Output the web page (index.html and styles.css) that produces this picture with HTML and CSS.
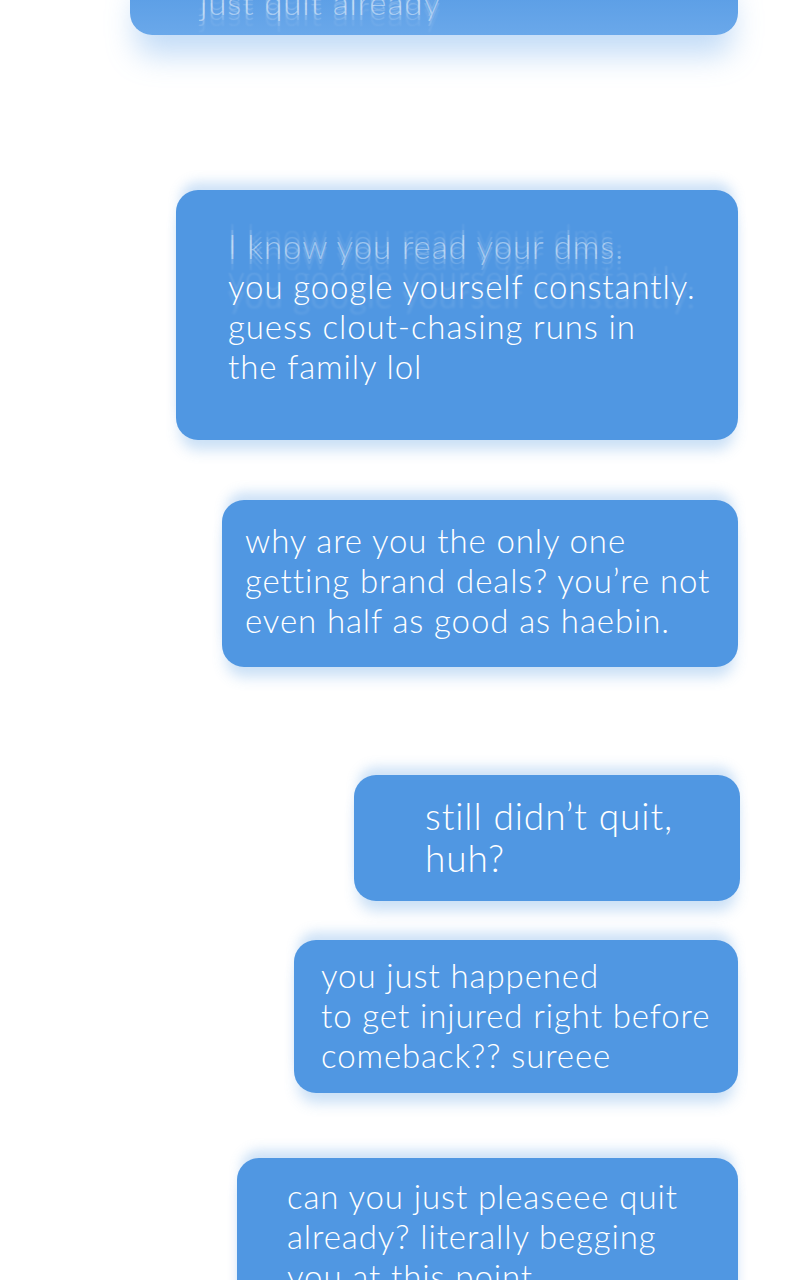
FILE: index.html
```html
<!DOCTYPE html>
<html lang="en">

<head>
    <meta charset="UTF-8">
    <meta name="viewport" content="width=device-width, initial-scale=1.0">
    <title>messages</title>
    <link rel="stylesheet" href="styles.css">
</head>

<body>
    <div class="thread">

        <!-- cut off at the top of the strip -->
        <div class="bubble bubble-first">
            <p class="line ghost">just quit already</p>
        </div>

        <div class="bubble bubble-dms">
            <p class="line ghost">I know you read your dms.</p>
            <p class="line echo">you google yourself constantly.</p>
            <p class="line">guess clout-chasing runs in</p>
            <p class="line">the family lol</p>
        </div>

        <div class="bubble bubble-deals">
            <p class="line">why are you the only one</p>
            <p class="line">getting brand deals? you’re not</p>
            <p class="line">even half as good as haebin.</p>
        </div>

        <div class="bubble bubble-quit">
            <p class="line">still didn’t quit,</p>
            <p class="line">huh?</p>
        </div>

        <div class="bubble bubble-injured">
            <p class="line">you just happened</p>
            <p class="line">to get injured right before</p>
            <p class="line">comeback?? sureee</p>
        </div>

        <div class="bubble bubble-beg">
            <p class="line">can you just pleaseee quit</p>
            <p class="line">already? literally begging</p>
            <p class="line">you at this point</p>
        </div>

    </div>
</body>

</html>
```

FILE: styles.css
```css
html, body {
    margin: 0;
    padding: 0;
    background: #fff;
    height: 1280px;
    overflow: hidden;
}

body {
    font-family: 'Lato', 'Noto Sans', sans-serif;
    font-weight: 300;
    color: #fff;
}

.thread {
    display: flex;
    flex-direction: column;
    align-items: flex-end;
    padding-right: 62px;
}

.bubble {
    box-sizing: border-box;
    background: #5097e2;
    border-radius: 22px;
    box-shadow:
        0 -12px 12px -4px rgba(80, 151, 226, 0.28),
        0 14px 14px -4px rgba(80, 151, 226, 0.3);
}

.line {
    margin: 0;
    font-size: 33px;
    line-height: 40px;
    letter-spacing: 0.9px;
    white-space: nowrap;
}

/* faded line, smeared up and down */
.ghost {
    color: rgba(255, 255, 255, 0.45);
    text-shadow:
        0 5px 1px rgba(255, 255, 255, 0.2),
        0 -5px 1px rgba(255, 255, 255, 0.2),
        0 11px 2px rgba(255, 255, 255, 0.1),
        0 -11px 2px rgba(255, 255, 255, 0.1);
}

.echo {
    text-shadow:
        0 -9px 2px rgba(255, 255, 255, 0.14),
        0 9px 3px rgba(255, 255, 255, 0.16);
}

.bubble-first {
    width: 608px;
    height: 75px;
    margin-top: -40px;
    padding: 22px 0 0 70px;
    background: linear-gradient(#4f96e2, #6aa8ea);
    box-shadow: 0 26px 30px -6px rgba(106, 168, 234, 0.4);
}

.bubble-dms {
    width: 562px;
    height: 250px;
    margin-top: 155px;
    padding: 36px 0 0 52px;
}

.bubble-deals {
    width: 516px;
    height: 167px;
    margin-top: 60px;
    padding: 20px 0 0 23px;
}

.bubble-quit {
    width: 386px;
    height: 126px;
    margin-top: 108px;
    margin-right: -2px;
    padding: 20px 0 0 71px;
}

.bubble-quit .line {
    font-size: 37px;
    line-height: 42px;
}

.bubble-injured {
    width: 444px;
    height: 153px;
    margin-top: 39px;
    padding: 15px 0 0 27px;
}

.bubble-beg {
    width: 501px;
    height: 160px;
    margin-top: 65px;
    padding: 18px 0 0 50px;
}
```
